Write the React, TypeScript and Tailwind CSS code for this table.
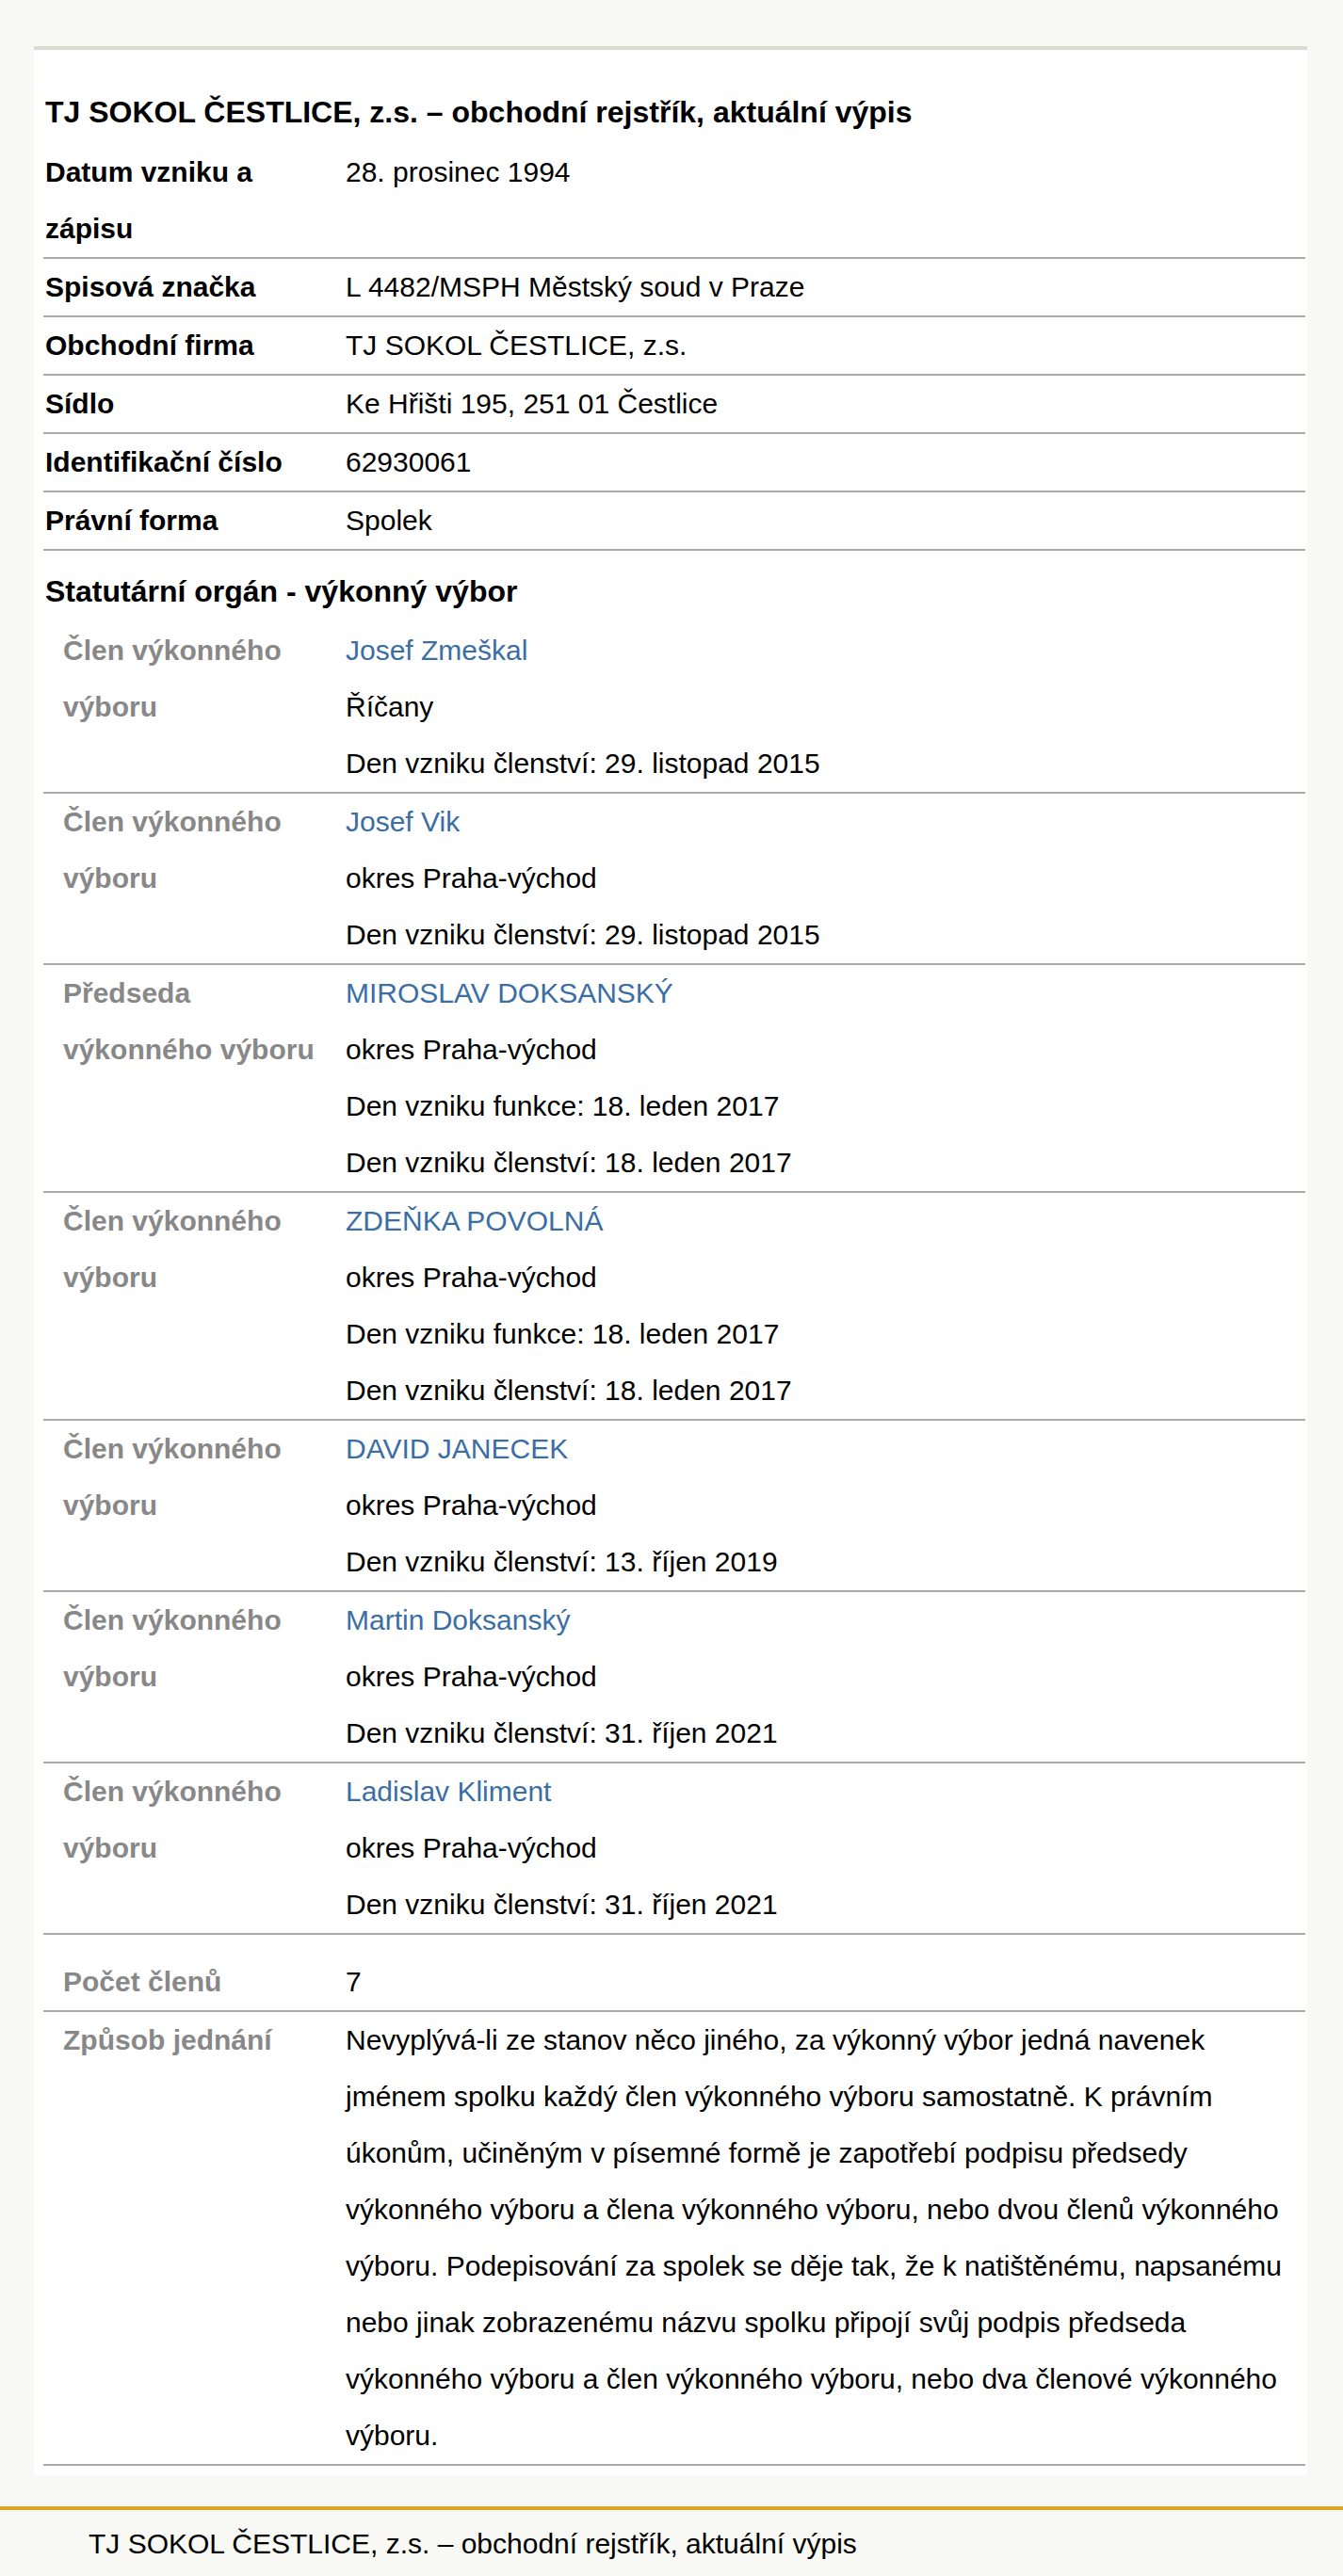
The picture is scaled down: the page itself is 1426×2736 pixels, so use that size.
const FONT = "font-['Liberation_Sans',Arial,sans-serif]";

type Member = { role: string; name: string; lines: string[] };

const BASIC: { label: string; value: string }[] = [
  { label: "Datum vzniku a zápisu", value: "28. prosinec 1994" },
  { label: "Spisová značka", value: "L 4482/MSPH Městský soud v Praze" },
  { label: "Obchodní firma", value: "TJ SOKOL ČESTLICE, z.s." },
  { label: "Sídlo", value: "Ke Hřišti 195, 251 01 Čestlice" },
  { label: "Identifikační číslo", value: "62930061" },
  { label: "Právní forma", value: "Spolek" },
];

const MEMBERS: Member[] = [
  { role: "Člen výkonného výboru", name: "Josef Zmeškal", lines: ["Říčany", "Den vzniku členství: 29. listopad 2015"] },
  { role: "Člen výkonného výboru", name: "Josef Vik", lines: ["okres Praha-východ", "Den vzniku členství: 29. listopad 2015"] },
  {
    role: "Předseda výkonného výboru",
    name: "MIROSLAV DOKSANSKÝ",
    lines: ["okres Praha-východ", "Den vzniku funkce: 18. leden 2017", "Den vzniku členství: 18. leden 2017"],
  },
  {
    role: "Člen výkonného výboru",
    name: "ZDEŇKA POVOLNÁ",
    lines: ["okres Praha-východ", "Den vzniku funkce: 18. leden 2017", "Den vzniku členství: 18. leden 2017"],
  },
  { role: "Člen výkonného výboru", name: "DAVID JANECEK", lines: ["okres Praha-východ", "Den vzniku členství: 13. říjen 2019"] },
  { role: "Člen výkonného výboru", name: "Martin Doksanský", lines: ["okres Praha-východ", "Den vzniku členství: 31. říjen 2021"] },
  { role: "Člen výkonného výboru", name: "Ladislav Kliment", lines: ["okres Praha-východ", "Den vzniku členství: 31. říjen 2021"] },
];

const ZPUSOB =
  "Nevyplývá-li ze stanov něco jiného, za výkonný výbor jedná navenek jménem spolku každý člen výkonného výboru samostatně. K právním úkonům, učiněným v písemné formě je zapotřebí podpisu předsedy výkonného výboru a člena výkonného výboru, nebo dvou členů výkonného výboru. Podepisování za spolek se děje tak, že k natištěnému, napsanému nebo jinak zobrazenému názvu spolku připojí svůj podpis předseda výkonného výboru a člen výkonného výboru, nebo dva členové výkonného výboru.";

const TITLE = "TJ SOKOL ČESTLICE, z.s. – obchodní rejstřík, aktuální výpis";

export default function App() {
  return (
    <div className={`min-h-screen bg-[#f8f8f4] pt-[49px] text-black ${FONT}`}>
      {/* výpis */}
      <div className="ml-[36px] w-[1352px] border-t-4 border-[#dcdcd2] bg-white pt-[36px] pb-[10px]">
        <h1 className="ml-[10px] mb-[4px] pl-[2px] text-[32px] font-bold leading-[60px]">{TITLE}</h1>

        <div className="ml-[10px] mr-[2px] text-[30px] leading-[60px]">
          {BASIC.map((row) => (
            <div key={row.label} className="flex border-b-2 border-[#aaaaaa]">
              <div className="w-[319px] shrink-0 pl-[2px] pr-[12px] font-bold">{row.label}</div>
              <div className="flex-1 pl-[2px]">{row.value}</div>
            </div>
          ))}

          <h2 className="pt-[13px] pb-[3px] pl-[2px] text-[32px] font-bold leading-[60px]">
            Statutární orgán - výkonný výbor
          </h2>

          {MEMBERS.map((m, i) => (
            <div key={i} className="flex border-b-2 border-[#aaaaaa]">
              <div className="w-[319px] shrink-0 pl-[21px] pr-[12px] font-bold text-[#888888]">{m.role}</div>
              <div className="flex-1 pl-[2px]">
                <div className="text-[#3a6ea5]">{m.name}</div>
                {m.lines.map((l) => (
                  <div key={l}>{l}</div>
                ))}
              </div>
            </div>
          ))}

          <div className="flex border-b-2 border-[#aaaaaa] pt-[20px]">
            <div className="w-[319px] shrink-0 pl-[21px] pr-[12px] font-bold text-[#888888]">Počet členů</div>
            <div className="flex-1 pl-[2px]">7</div>
          </div>
          <div className="flex border-b-2 border-[#aaaaaa]">
            <div className="w-[319px] shrink-0 pl-[21px] pr-[12px] font-bold text-[#888888]">Způsob jednání</div>
            <div className="flex-1 pl-[2px] pr-[20px]">{ZPUSOB}</div>
          </div>
        </div>
      </div>

      <footer className="mt-[33px] border-t-4 border-[#daa520] pt-[6px] pb-[4px] pl-[94px] text-[30px] leading-[60px]">
        {TITLE}
      </footer>
    </div>
  );
}
